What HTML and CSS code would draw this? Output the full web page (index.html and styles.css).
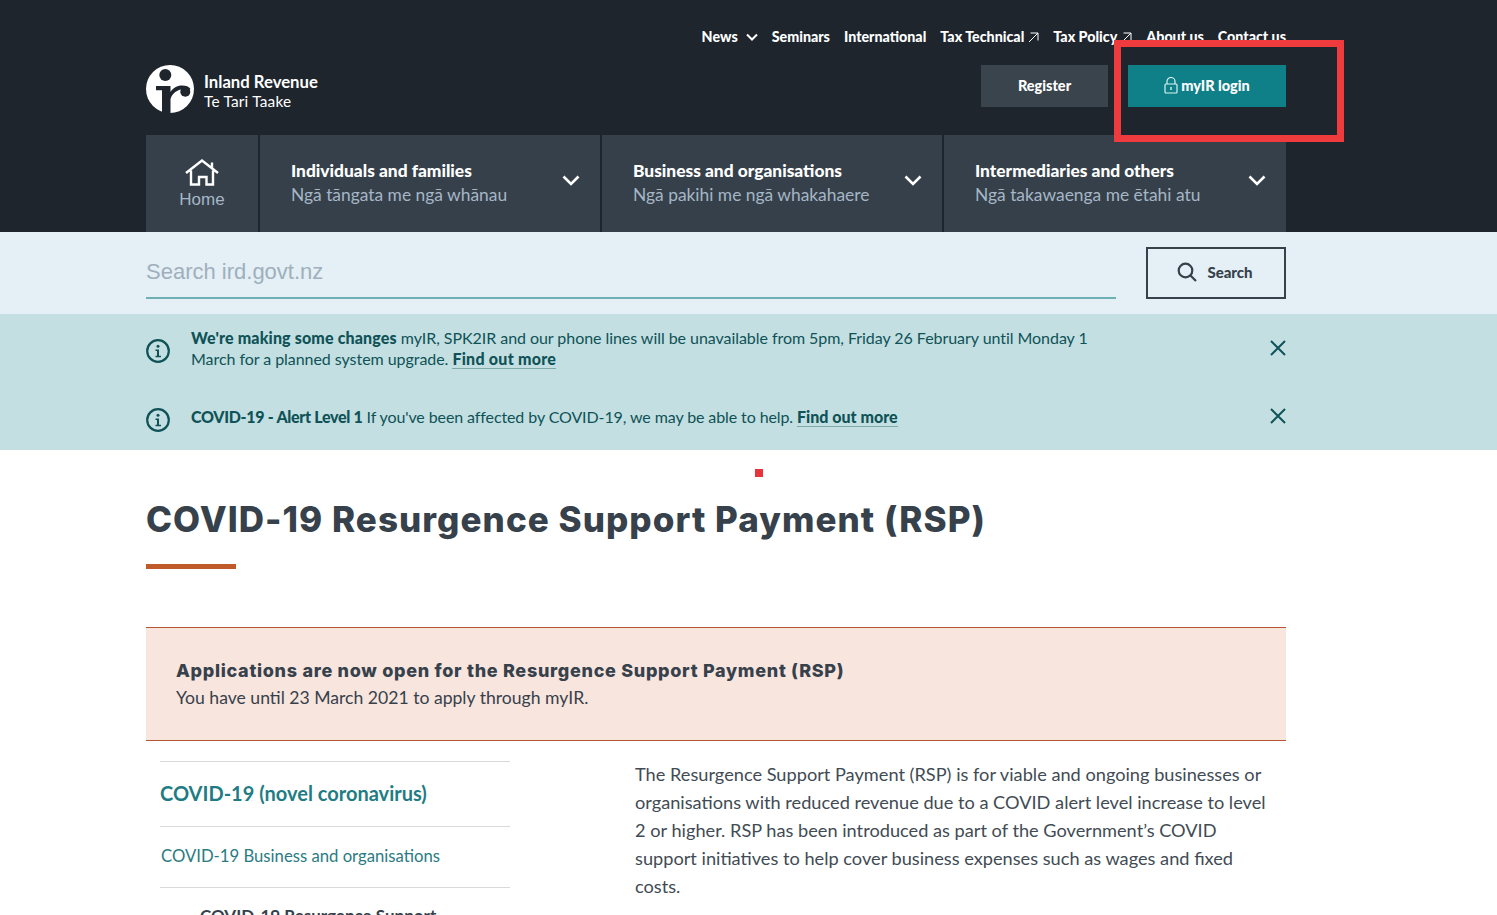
FILE: index.html
```html
<!DOCTYPE html>
<html lang="en">
<head>
<meta charset="utf-8">
<title>COVID-19 Resurgence Support Payment (RSP)</title>
<link rel="stylesheet" href="styles.css">
</head>
<body>
<header class="masthead">
  <div class="wrap">
    <nav class="topnav">
      <a>News <svg class="chev-sm" viewBox="0 0 12 8"><path d="M1 1.500l5 5 5-5" fill="none" stroke="#fff" stroke-width="2"/></svg></a>
      <a>Seminars</a>
      <a>International</a>
      <a>Tax Technical <svg class="ext" viewBox="0 0 11 11"><path d="M1 10L10 1M2.500 1H10V8.500" fill="none" stroke="#fff" stroke-width="1"/></svg></a>
      <a>Tax Policy <svg class="ext" viewBox="0 0 11 11"><path d="M1 10L10 1M2.500 1H10V8.500" fill="none" stroke="#fff" stroke-width="1"/></svg></a>
      <a>About us</a>
      <a>Contact us</a>
    </nav>
    <div class="brandrow">
      <div class="logo">
        <svg class="logomark" viewBox="0 0 48 48">
          <circle cx="24" cy="24" r="24" fill="#fff"/>
          <circle cx="19.300" cy="10" r="6" fill="#1e252d"/>
          <path d="M10 21H24.500V27C27 23 31 20.500 36 20.500C40 20.500 43 21.500 44.500 24L43 25C40 23.500 36 23.500 32 25.500C28 27.500 25.500 30 24.500 34V48.500H16V25.300H10z" fill="#1e252d"/>
          <circle cx="39.300" cy="26.700" r="5" fill="#1e252d"/>
        </svg>
        <div class="logotext"><strong>Inland Revenue</strong><span>Te Tari Taake</span></div>
      </div>
      <div class="actions">
        <a class="btn btn-reg">Register</a>
        <a class="btn btn-login"><svg class="lock" viewBox="0 0 14 17"><path d="M3 7V4.500a4 4 0 018 0V7" fill="none" stroke="#d8f4f4" stroke-width="1.200"/><rect x="1" y="7" width="12" height="9" rx="1" fill="none" stroke="#d8f4f4" stroke-width="1.200"/><rect x="6.300" y="10" width="1.400" height="3" fill="#d8f4f4"/></svg>myIR login</a>
      </div>
    </div>
    <nav class="mainnav">
      <a class="home">
        <svg class="homeicon" viewBox="0 0 34 28"><path d="M1 14L17 1.500 33 14M27 3.500V9.500M6 11.500V25.500H14V18H21.500V25.500H28V11.500" fill="none" stroke="#fff" stroke-width="2.400"/></svg>
        <span>Home</span>
      </a>
      <a class="navitem"><div><strong>Individuals and families</strong><span>Ngā tāngata me ngā whānau</span></div><svg class="chev" viewBox="0 0 18 11"><path d="M1.500 1.500L9 9l7.500-7.500" fill="none" stroke="#fff" stroke-width="2.600"/></svg></a>
      <a class="navitem"><div><strong>Business and organisations</strong><span>Ngā pakihi me ngā whakahaere</span></div><svg class="chev" viewBox="0 0 18 11"><path d="M1.500 1.500L9 9l7.500-7.500" fill="none" stroke="#fff" stroke-width="2.600"/></svg></a>
      <a class="navitem wide"><div><strong>Intermediaries and others</strong><span>Ngā takawaenga me ētahi atu</span></div><svg class="chev" viewBox="0 0 18 11"><path d="M1.500 1.500L9 9l7.500-7.500" fill="none" stroke="#fff" stroke-width="2.600"/></svg></a>
    </nav>
  </div>
</header>

<section class="searchband">
  <div class="wrap searchrow">
    <div class="searchfield">Search ird.govt.nz</div>
    <button class="searchbtn"><svg class="mag" viewBox="0 0 20 20"><circle cx="8.500" cy="8.500" r="6.800" fill="none" stroke="#36414b" stroke-width="2.200"/><path d="M13.500 13.500L19 19" stroke="#36414b" stroke-width="2.200"/></svg>Search</button>
  </div>
</section>

<section class="alerts">
  <div class="wrap">
    <div class="alert first">
      <svg class="info" viewBox="0 0 24 24"><circle cx="12" cy="12" r="10.800" fill="none" stroke="#0f5257" stroke-width="2.200"/><circle cx="12" cy="7.300" r="1.500" fill="#0f5257"/><path d="M9.500 10.500h3.500v6.200h2v1.500H9.500v-1.500h1.500v-4.700H9.500z" fill="#0f5257"/></svg>
      <p><strong>We're making some changes</strong> myIR, SPK2IR and our phone lines will be unavailable from 5pm, Friday 26 February until Monday 1 March for a planned system upgrade. <a>Find out more</a></p>
      <svg class="close" viewBox="0 0 16 16"><path d="M1 1l14 14M15 1L1 15" stroke="#0f5257" stroke-width="2"/></svg>
    </div>
    <div class="alert second">
      <svg class="info" viewBox="0 0 24 24"><circle cx="12" cy="12" r="10.800" fill="none" stroke="#0f5257" stroke-width="2.200"/><circle cx="12" cy="7.300" r="1.500" fill="#0f5257"/><path d="M9.500 10.500h3.500v6.200h2v1.500H9.500v-1.500h1.500v-4.700H9.500z" fill="#0f5257"/></svg>
      <p><strong>COVID-19 - Alert Level 1</strong> If you've been affected by COVID-19, we may be able to help. <a>Find out more</a></p>
      <svg class="close" viewBox="0 0 16 16"><path d="M1 1l14 14M15 1L1 15" stroke="#0f5257" stroke-width="2"/></svg>
    </div>
  </div>
</section>

<main class="wrap content">
  <h1>COVID-19 Resurgence Support Payment (RSP)</h1>
  <div class="rule"></div>
  <div class="callout">
    <h2>Applications are now open for the Resurgence Support Payment (RSP)</h2>
    <p>You have until 23 March 2021 to apply through myIR.</p>
  </div>
  <div class="columns">
    <aside class="side">
      <a class="side-top">COVID-19 (novel coronavirus)</a>
      <a class="side-link">COVID-19 Business and organisations</a>
      <a class="side-cur">COVID-19 Resurgence Support Payment</a>
    </aside>
    <article class="body">
      <p>The Resurgence Support Payment (RSP) is for viable and ongoing businesses or organisations with reduced revenue due to a COVID alert level increase to level 2 or higher. RSP has been introduced as part of the Government’s COVID support initiatives to help cover business expenses such as wages and fixed costs.</p>
    </article>
  </div>
</main>

<div class="annotation"></div>
<div class="marker"></div>
</body>
</html>
```
FILE: styles.css
```css
* { box-sizing: border-box; }
html, body { margin: 0; height: 915px; overflow: hidden; }
body { font-family: "Lato", "Open Sans", sans-serif; color: #36414b; background: #fff; position: relative; }
.wrap { width: 1140px; margin-left: 146px; }
a { color: inherit; text-decoration: none; }

.masthead { background: #1e252d; height: 232px; }
.topnav { display: flex; justify-content: flex-end; gap: 14px; height: 65px; padding-top: 28px; color: #fff; font-size: 14.250px; line-height: 18px; font-weight: 900; white-space: nowrap; }
.topnav a { display: flex; align-items: center; gap: 4px; height: 18px; }
.chev-sm { width: 12px; height: 8px; margin-left: 4px; }
.ext { width: 11px; height: 11px; }

.brandrow { display: flex; justify-content: space-between; height: 70px; }
.logo { display: flex; gap: 10px; }
.logomark { width: 48px; height: 48px; }
.logotext { display: flex; flex-direction: column; padding-top: 8px; color: #fff; font-family: "Lato", sans-serif; font-size: 16.700px; line-height: 19px; }
.logotext strong { font-weight: 700; }
.logotext span { font-size: 15.400px; letter-spacing: .2px; }
.actions { display: flex; gap: 20px; }
.btn { display: flex; align-items: center; justify-content: center; height: 42px; padding-bottom: 2px; font-size: 14.500px; font-weight: 900; color: #fff; }
.btn-reg { width: 127px; background: #3a444d; }
.btn-login { width: 158px; background: #0f7f88; gap: 3px; }
.lock { width: 14px; height: 17px; }

.mainnav { display: flex; gap: 2px; height: 97px; }
.mainnav a { background: #36404a; }
.home { width: 112px; display: flex; flex-direction: column; align-items: center; padding-top: 24px; color: #a5b6c6; font-family: "Liberation Sans", sans-serif; font-size: 17px; line-height: 20px; }
.homeicon { width: 34px; height: 28px; margin-bottom: 3px; }
.navitem { width: 340px; display: flex; justify-content: space-between; align-items: center; padding: 0 20px 0 31px; }
.navitem.wide { width: 342px; }
.navitem div { display: flex; flex-direction: column; gap: 3px; margin-top: -3px; }
.navitem strong { color: #fff; font-size: 17.350px; line-height: 21px; font-weight: 900; }
.navitem span { color: #a5b6c6; font-size: 17.400px; line-height: 21px; }
.chev { width: 18px; height: 11px; margin-top: -6px; }

.searchband { background: #e4eff6; height: 82px; }
.searchrow { display: flex; justify-content: space-between; padding-top: 15px; }
.searchfield { width: 970px; height: 52px; border-bottom: 2px solid #6fb0b4; font-family: "Liberation Sans", sans-serif; font-size: 22px; line-height: 49px; color: #9fb0bc; }
.searchbtn { width: 140px; height: 52px; display: flex; align-items: center; justify-content: center; gap: 10px; padding: 0 2px 2px 0; background: transparent; border: 2px solid #36414b; font: 900 15px "Lato", sans-serif; color: #36414b; }
.mag { width: 20px; height: 20px; }

.alerts { background: #c3dfe1; height: 136px; color: #0f5257; font-size: 16px; line-height: 21px; }
.alert { display: flex; align-items: flex-start; }
.alert p { margin: 0; width: 915px; }
.alert strong, .alert a { font-weight: 900; }
.alert a { border-bottom: 1px solid #7fa9ab; }
.alert.first { height: 78px; padding-top: 13px; letter-spacing: -.05px; }
.alert.first strong { letter-spacing: .15px; }
.alert.first a { letter-spacing: .25px; }
.alert.second { height: 58px; padding-top: 14px; letter-spacing: -.1px; }
.alert.second strong { letter-spacing: -.3px; }
.alert.second a { letter-spacing: 0; }
.info { width: 24px; height: 24px; margin: 12px 21px 0 0; flex: none; }
.alert.second .info { margin-top: 2px; }
.close { width: 16px; height: 16px; margin: 13px 0 0 auto; flex: none; }
.alert.second .close { margin-top: -5px; position: relative; top: 7px; }

.content { padding-top: 46px; }
h1 { margin: 0; font-family: "Inter", sans-serif; font-size: 35px; line-height: 46px; font-weight: 800; letter-spacing: 1.050px; color: #36414b; white-space: nowrap; }
.rule { width: 90px; height: 5px; margin-top: 22px; background: #c05a2a; }
.callout { margin-top: 58px; height: 114px; padding: 30px 30px 0; background: #f8e5de; border-top: 1px solid #b3562e; border-bottom: 1px solid #b3562e; }
.callout h2 { margin: 0; font-family: "Inter", sans-serif; font-size: 18px; line-height: 26px; font-weight: 800; letter-spacing: .7px; }
.callout p { margin: 1px 0 0; font-size: 17.600px; line-height: 26px; }

.columns { display: flex; padding: 20px 0 0 14px; }
.side { width: 350px; margin-right: 125px; flex: none; border-top: 1px solid #d9d9d9; }
.side a { display: block; }
.side-top { height: 65px; padding-top: 18px; border-bottom: 1px solid #d9d9d9; color: #1f7c84; font-size: 20px; line-height: 26px; font-weight: 700; }
.side-link { height: 61px; padding: 17px 0 0 1px; border-bottom: 1px solid #d9d9d9; color: #2b7b82; font-size: 16.700px; line-height: 24px; }
.side-cur { padding: 16px 60px 0 40px; color: #36414b; font-size: 17px; line-height: 24px; font-weight: 700; }
.body { width: 632px; margin-top: -1px; }
.body p { margin: 0; font-size: 18.200px; line-height: 28px; color: #414b54; }

.annotation { position: absolute; left: 1114px; top: 40px; width: 230px; height: 102px; border: 7px solid #ef3a3e; }
.marker { position: absolute; left: 755px; top: 469px; width: 8px; height: 8px; background: #e8333a; }
```
